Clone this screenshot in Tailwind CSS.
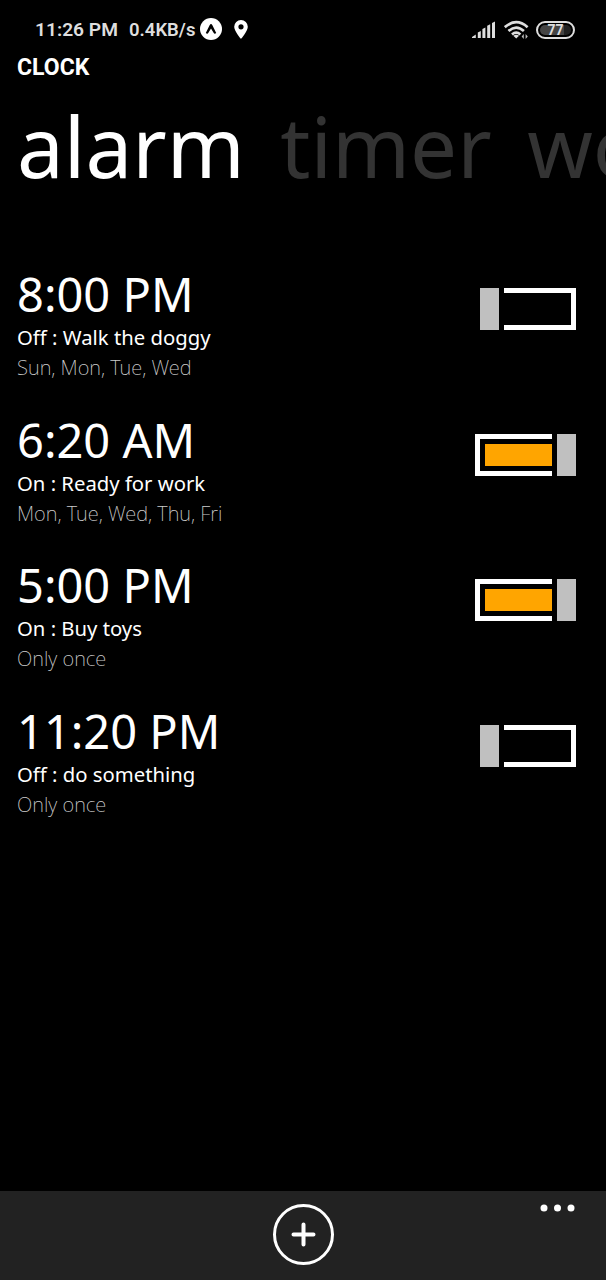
<!DOCTYPE html>
<html lang="en">
<head>
<meta charset="utf-8">
<title>Clock</title>
<script src="https://cdn.jsdelivr.net/npm/@tailwindcss/browser@4"></script>
</head>
<body class="bg-black">
<div class="flex h-[1280px] w-[606px] flex-col overflow-hidden bg-black font-['Noto_Sans',sans-serif] text-white antialiased">
  <header class="flex h-[54px] shrink-0 items-center pt-[5px] pr-[31px] pl-[35px] font-['Roboto',sans-serif] text-[19px] font-semibold text-[#dedede]">
    <span class="w-[94px] pt-px text-[19.200px] whitespace-nowrap">11:26 PM</span>
    <span class="w-[71px] pt-[2px] text-[18.500px] whitespace-nowrap">0.4KB/s</span>
    <svg class="-mt-px h-[22px] w-[22px]" viewBox="0 0 22 22"><circle cx="11" cy="11" r="11" fill="#fff"/><path d="M5.800 15 9.600 7.200Q11 4.800 12.400 7.200L16.200 15Q14.600 16.600 13.600 14.800L11 10.400 8.400 14.800Q7.400 16.600 5.800 15Z" fill="#000"/></svg>
    <svg class="-mt-px ml-3 h-[19px] w-[14px]" viewBox="0 0 14 19"><path fill="#fff" fill-rule="evenodd" d="M7 0a6.800 6.800 0 0 1 6.800 6.800C13.800 11 7 19 7 19S.2 11 .2 6.800A6.800 6.800 0 0 1 7 0ZM7 4.200a2.600 2.600 0 1 0 0 5.200 2.600 2.600 0 0 0 0-5.200Z"/></svg>
    <svg class="mr-px ml-auto h-[18px] w-[24px]" viewBox="0 0 24 18" fill="#dedede"><path d="M0 17v-1l3.800-2.500V17ZM5.800 11.500l3-1.500v7h-3ZM10.400 8l3-1.500V17h-3ZM15.200 4.800l3-1.500V17h-3ZM20 2l3-1.500V17h-3Z"/></svg>
    <svg class="ml-[7px] h-[20px] w-[26px]" viewBox="0 0 26 20" fill="none" stroke="#dedede" stroke-width="2.700"><path d="M.8 7.200Q12.200-2.800 23.600 7.200M4.500 11Q12.200 4.100 19.900 11M8 14.500Q12.200 10.800 16.400 14.500"/><path d="m9.300 15.800 2.900 2.700 2.900-2.700Q12.200 13.800 9.300 15.800Z" fill="#dedede" stroke="none"/><path d="m17.600 16.500 2.200-2.500v5ZM23.800 16.500 21.600 19v-5Z" fill="#bbb" stroke="none"/></svg>
    <span class="ml-[6px] flex h-[18px] w-[39px] items-center rounded-full border-2 border-[#dedede] p-[2px]"><span class="flex h-full w-full items-center justify-center rounded-full bg-[linear-gradient(90deg,#444_77%,#222_77%)] text-[14px] leading-none font-bold">77</span></span>
  </header>
  <h1 class="h-[32px] shrink-0 pl-[17px] font-['Roboto',sans-serif] text-[23px] leading-[28px] font-bold">CLOCK</h1>
  <nav class="flex h-[180px] shrink-0 gap-[35.500px] pl-[17px] text-[83.500px] leading-[120px] whitespace-nowrap">
    <span>alarm</span><span class="text-[#333]">timer</span><span class="text-[#333]">world clock</span>
  </nav>
  <main class="flex flex-1 flex-col pr-[30px] pl-[17px]">
    <section class="flex h-[145.700px] justify-between">
      <div><p class="text-[47px] leading-[57px]">8:00 PM</p><p class="text-[20.300px] leading-[28px]">Off : Walk the doggy</p><p class="text-[20.100px] leading-[34px] font-extralight text-[#ccc]">Sun, Mon, Tue, Wed</p></div>
      <div class="mt-[22px] flex h-[42px] gap-[5px]"><span class="w-[19px] bg-[#c0c0c0]"></span><span class="w-[72px] border-5 border-l-0 border-white"></span></div>
    </section>
    <section class="flex h-[145.700px] justify-between">
      <div><p class="text-[47px] leading-[57px]">6:20 AM</p><p class="text-[20.300px] leading-[28px]">On : Ready for work</p><p class="text-[20.100px] leading-[34px] font-extralight text-[#ccc]">Mon, Tue, Wed, Thu, Fri</p></div>
      <div class="mt-[22px] flex h-[42px] gap-[5px]"><span class="flex w-[77px] border-5 border-r-0 border-white py-[5px] pl-[5px]"><span class="flex-1 bg-[#ffa500]"></span></span><span class="w-[19px] bg-[#c0c0c0]"></span></div>
    </section>
    <section class="flex h-[145.700px] justify-between">
      <div><p class="text-[47px] leading-[57px]">5:00 PM</p><p class="text-[20.300px] leading-[28px]">On : Buy toys</p><p class="text-[20.100px] leading-[34px] font-extralight text-[#ccc]">Only once</p></div>
      <div class="mt-[22px] flex h-[42px] gap-[5px]"><span class="flex w-[77px] border-5 border-r-0 border-white py-[5px] pl-[5px]"><span class="flex-1 bg-[#ffa500]"></span></span><span class="w-[19px] bg-[#c0c0c0]"></span></div>
    </section>
    <section class="flex h-[145.700px] justify-between">
      <div><p class="text-[47px] leading-[57px]">11:20 PM</p><p class="text-[20.300px] leading-[28px]">Off : do something</p><p class="text-[20.100px] leading-[34px] font-extralight text-[#ccc]">Only once</p></div>
      <div class="mt-[22px] flex h-[42px] gap-[5px]"><span class="w-[19px] bg-[#c0c0c0]"></span><span class="w-[72px] border-5 border-l-0 border-white"></span></div>
    </section>
  </main>
  <footer class="grid h-[89px] shrink-0 grid-cols-3 bg-[#222] pt-[13px]">
    <span></span>
    <svg class="h-[61px] w-[61px] justify-self-center" viewBox="0 0 61 61" fill="none" stroke="#fff"><circle cx="30.500" cy="30.500" r="29" stroke-width="3"/><path d="M30.500 20.500v20M20.500 30.500h20" stroke-width="4" stroke-linecap="round"/></svg>
    <svg class="mr-[31px] h-[8px] w-[35px] justify-self-end" viewBox="0 0 35 8" fill="#fff"><circle cx="4" cy="4" r="3.500"/><circle cx="17.500" cy="4" r="3.500"/><circle cx="31" cy="4" r="3.500"/></svg>
  </footer>
</div>
</body>
</html>
